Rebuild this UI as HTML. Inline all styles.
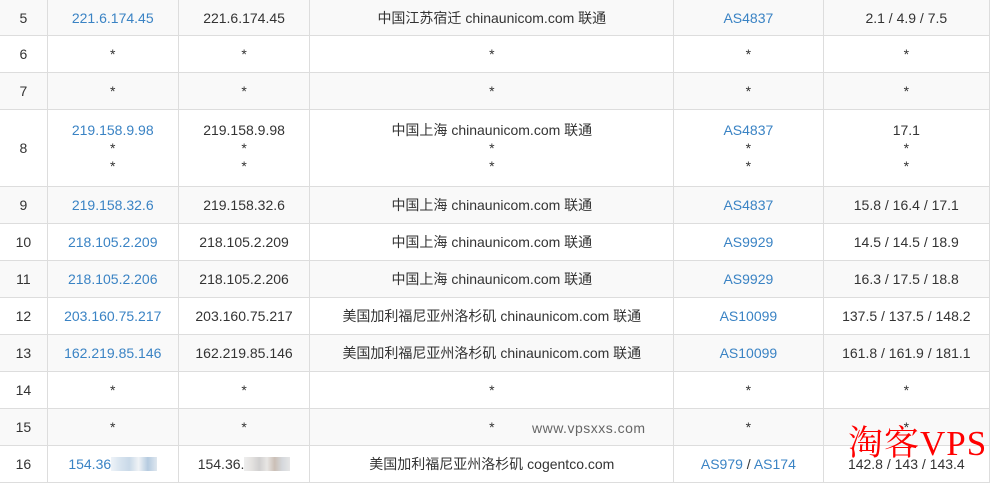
<!DOCTYPE html>
<html><head><meta charset="utf-8"><style>
body{margin:0;width:991px;height:480px;overflow:hidden;background:#fff;font-family:"Liberation Sans","Noto Sans CJK SC",sans-serif;font-size:14px;color:#333;position:relative}
table{border-collapse:collapse;position:absolute;left:-1px;top:-1px;table-layout:fixed}
td{border:1px solid #ddd;text-align:center;vertical-align:middle;padding:0;line-height:18px}
tr{height:37px}
tr.g td{background:#f9f9f9}
a{color:#3a83c4;text-decoration:none}
.blur{display:inline-block;width:46px;height:14px;vertical-align:-2px;background:linear-gradient(90deg,#eef3f8,#d8e4ef,#c9d9e8,#f0f3f6,#b5cbe0,#dfe7ef)}
.blur2{display:inline-block;width:46px;height:14px;vertical-align:-2px;background:linear-gradient(90deg,#eee,#e4e2e0,#d0cfcf,#e8e6e4,#cbbfb6,#d5d8dc,#e6e6e6)}
.wm{position:absolute;left:532px;top:420px;color:#666;font-size:14px;letter-spacing:.5px}
.tk{position:absolute;left:848px;top:424px;color:#f00;font-family:"Liberation Serif","Noto Serif CJK SC",serif;font-size:35px;line-height:40px;letter-spacing:1px}
</style></head><body>
<table>
<colgroup><col style="width:48px"><col style="width:131px"><col style="width:132px"><col style="width:365px"><col style="width:150px"><col style="width:167px"></colgroup>
<tr class="g" style="height:36px"><td>5</td><td><a>221.6.174.45</a></td><td>221.6.174.45</td><td>中国江苏宿迁 chinaunicom.com 联通</td><td><a>AS4837</a></td><td>2.1 / 4.9 / 7.5</td></tr>
<tr><td>6</td><td>*</td><td>*</td><td>*</td><td>*</td><td>*</td></tr>
<tr class="g"><td>7</td><td>*</td><td>*</td><td>*</td><td>*</td><td>*</td></tr>
<tr style="height:77px"><td>8</td><td><a>219.158.9.98</a><br>*<br>*</td><td>219.158.9.98<br>*<br>*</td><td>中国上海 chinaunicom.com 联通<br>*<br>*</td><td><a>AS4837</a><br>*<br>*</td><td>17.1<br>*<br>*</td></tr>
<tr class="g"><td>9</td><td><a>219.158.32.6</a></td><td>219.158.32.6</td><td>中国上海 chinaunicom.com 联通</td><td><a>AS4837</a></td><td>15.8 / 16.4 / 17.1</td></tr>
<tr><td>10</td><td><a>218.105.2.209</a></td><td>218.105.2.209</td><td>中国上海 chinaunicom.com 联通</td><td><a>AS9929</a></td><td>14.5 / 14.5 / 18.9</td></tr>
<tr class="g"><td>11</td><td><a>218.105.2.206</a></td><td>218.105.2.206</td><td>中国上海 chinaunicom.com 联通</td><td><a>AS9929</a></td><td>16.3 / 17.5 / 18.8</td></tr>
<tr><td>12</td><td><a>203.160.75.217</a></td><td>203.160.75.217</td><td>美国加利福尼亚州洛杉矶 chinaunicom.com 联通</td><td><a>AS10099</a></td><td>137.5 / 137.5 / 148.2</td></tr>
<tr class="g"><td>13</td><td><a>162.219.85.146</a></td><td>162.219.85.146</td><td>美国加利福尼亚州洛杉矶 chinaunicom.com 联通</td><td><a>AS10099</a></td><td>161.8 / 161.9 / 181.1</td></tr>
<tr><td>14</td><td>*</td><td>*</td><td>*</td><td>*</td><td>*</td></tr>
<tr class="g"><td>15</td><td>*</td><td>*</td><td>*</td><td>*</td><td>*</td></tr>
<tr><td>16</td><td><a>154.36</a><span class="blur"></span></td><td>154.36.<span class="blur2"></span></td><td>美国加利福尼亚州洛杉矶 cogentco.com</td><td><a>AS979</a> / <a>AS174</a></td><td>142.8 / 143 / 143.4</td></tr>
</table>
<div class="wm">www.vpsxxs.com</div>
<div class="tk">淘客VPS</div>
</body></html>
